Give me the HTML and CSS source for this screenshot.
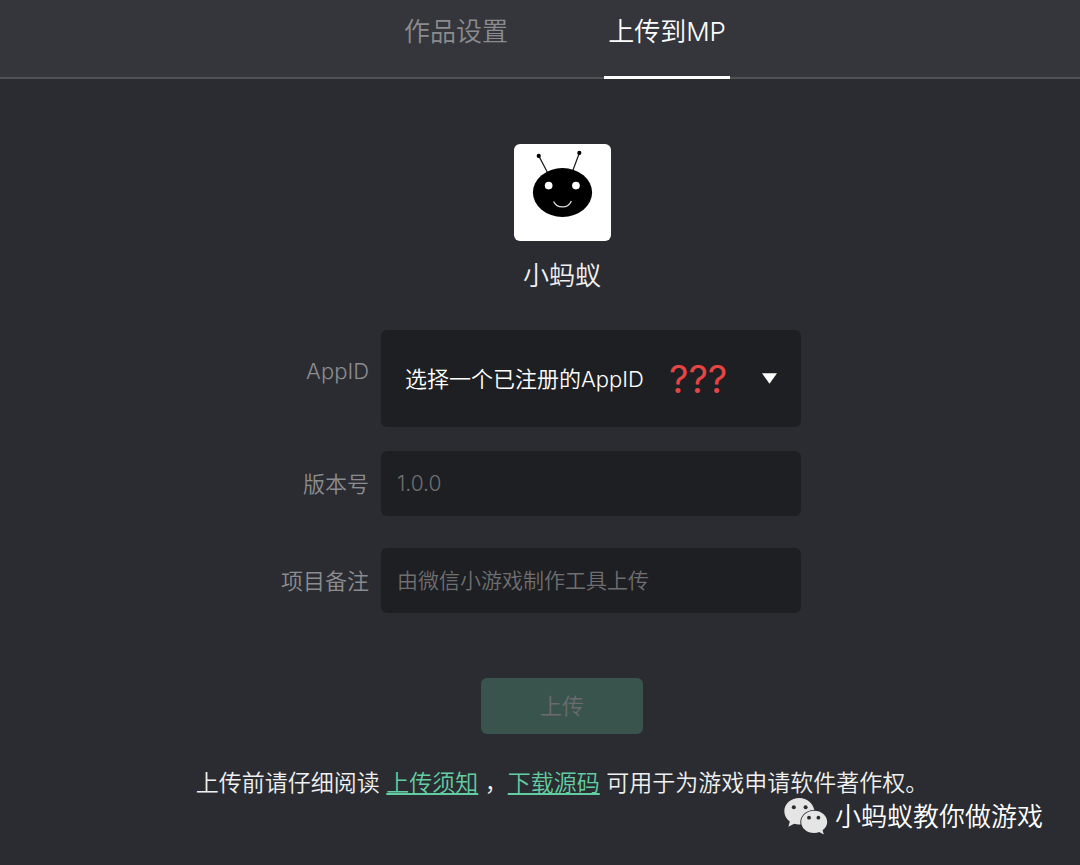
FILE: index.html
```html
<!DOCTYPE html>
<html lang="zh-CN">
<head>
    <meta charset="UTF-8">
    <meta name="viewport" content="width=device-width, initial-scale=1.0">
    <title>上传到MP</title>
    <link rel="stylesheet" href="styles.css">
</head>
<body>
    <nav class="tabs">
        <a class="tab" href="#settings">作品设置</a>
        <a class="tab active" href="#upload">上传到MP</a>
    </nav>

    <main>
        <div class="project">
            <svg class="logo" viewBox="0 0 98 98" role="img" aria-label="小蚂蚁">
                <rect width="98" height="98" rx="6" fill="#fff"/>
                <path d="M25 12L34 29M66 9L59 28" stroke="#222" stroke-width="1.3"/>
                <circle cx="25" cy="12" r="2.1"/>
                <circle cx="66" cy="9" r="2.1"/>
                <ellipse cx="49" cy="49" rx="29.9" ry="24.7"/>
                <circle cx="35" cy="42" r="3.9" fill="#fff"/>
                <circle cx="62.6" cy="42" r="3.9" fill="#fff"/>
                <path d="M40 58C43.5 65.5 54.5 65.5 58 57.5" fill="none" stroke="#ddd" stroke-width="1.3"/>
            </svg>
            <h1>小蚂蚁</h1>
        </div>

        <form class="upload-form" id="uploadForm">
            <div class="field field-appid">
                <label for="appid">AppID</label>
                <div class="select-box">
                    <select id="appid" name="appid">
                        <option>选择一个已注册的AppID</option>
                    </select>
                    <span class="mark">???</span>
                    <svg class="arrow" viewBox="0 0 14 10" aria-hidden="true"><path d="M0 0H14L7 10Z" fill="#fff"/></svg>
                </div>
            </div>
            <div class="field">
                <label for="version">版本号</label>
                <input type="text" id="version" name="version" placeholder="1.0.0">
            </div>
            <div class="field">
                <label for="remark">项目备注</label>
                <input type="text" id="remark" name="remark" placeholder="由微信小游戏制作工具上传">
            </div>
        </form>

        <div class="actions">
            <button type="submit" form="uploadForm" disabled>上传</button>
            <p>上传前请仔细阅读 <a href="#notice">上传须知</a> ，<a href="#source">下载源码</a> 可用于为游戏申请软件著作权。</p>
        </div>
    </main>

    <div class="watermark">
        <svg viewBox="0 0 44 38" aria-hidden="true">
            <path d="M15.5 0C7 0 .3 5.9 .3 13.3C.3 17.4 2.4 21 5.8 23.5L4.4 28.8L10.2 25.8C12.2 26.5 14.4 26.7 16.5 26.5C15.2 18.4 21.8 11.8 30.3 12C29 5.1 22.8 0 15.5 0Z" fill="#e4e5e4"/>
            <path d="M30.2 12.8C22.9 12.8 17.2 17.7 17.2 24C17.2 30.2 22.9 35 30.2 35C32 35 33.7 34.7 35.2 34.1L39.8 36.6L38.6 32.2C41.5 30.1 43.2 27.2 43.2 24C43.2 17.7 37.5 12.8 30.2 12.8Z" fill="#e4e5e4"/>
            <g fill="#2b2c31">
                <circle cx="9.8" cy="9.3" r="2"/>
                <circle cx="21.6" cy="9.3" r="2"/>
                <circle cx="25" cy="19.7" r="1.9"/>
                <circle cx="34.4" cy="19.7" r="1.9"/>
            </g>
        </svg>
        <span>小蚂蚁教你做游戏</span>
    </div>
</body>
</html>
```

FILE: styles.css
```css
* { box-sizing: border-box; }
body { position: relative; min-height: 100vh; margin: 0; background: #2b2c31; color: #f0f0f0; font-family: Inter, "Noto Sans CJK SC", sans-serif; font-size: 22px; font-weight: 350; line-height: 32px; }
input, select, button { font: inherit; border: none; outline: none; }

.tabs { display: flex; justify-content: center; gap: 92px; height: 79px; padding-left: 50px; background: #35363b; border-bottom: 2px solid #505155; }
.tab { height: 79px; padding: 12px 4px 0; color: #8b8c8f; font-size: 26px; line-height: 40px; text-decoration: none; }
.tab.active { color: #fff; border-bottom: 3px solid #fff; }

main { padding: 65px 0 32px; }
.project { display: flex; flex-direction: column; align-items: center; padding-left: 44px; }
.logo { width: 97px; height: 97px; }
h1 { margin: 15px 0 0; font-size: 26px; font-weight: 350; line-height: 40px; }

.upload-form { width: 522px; max-width: 100%; margin: 34px auto 0; }
.field { display: flex; align-items: center; gap: 12px; margin-bottom: 32px; }
.field label { flex: 1; color: #8b8c8f; text-align: right; white-space: nowrap; }
.field input { width: 420px; height: 65px; padding: 0 16px; border-radius: 6px; background: #1e1f23; color: #f0f0f0; font-size: 21px; }
.field input::placeholder { color: #6f6f70; opacity: 1; }
.field-appid { margin-bottom: 24px; }
.field-appid label { padding-bottom: 16px; }

.select-box { position: relative; width: 420px; }
.select-box select { display: block; width: 100%; height: 97px; padding: 0 24px; border-radius: 6px; background: #1e1f23; color: #fff; appearance: none; }
.mark { position: absolute; top: 24px; left: 288px; color: #e64545; font-size: 38px; font-weight: 400; line-height: 50px; pointer-events: none; }
.arrow { position: absolute; top: 43px; right: 24px; width: 15px; height: 11px; pointer-events: none; }

.actions { display: flex; flex-direction: column; align-items: center; padding-left: 44px; padding-top: 33px; }
.actions button { width: 162px; height: 56px; border-radius: 6px; background: #39534d; color: #6b6b6e; }
.actions p { margin: 32px 0 0; font-size: 23px; line-height: 34px; }
.actions a { color: #62cda2; text-underline-offset: 2px; }

.watermark { position: absolute; right: 37px; bottom: 28px; display: flex; align-items: center; gap: 7px; color: #fff; font-size: 26px; line-height: 40px; }
.watermark svg { width: 44px; height: 38px; }
```
